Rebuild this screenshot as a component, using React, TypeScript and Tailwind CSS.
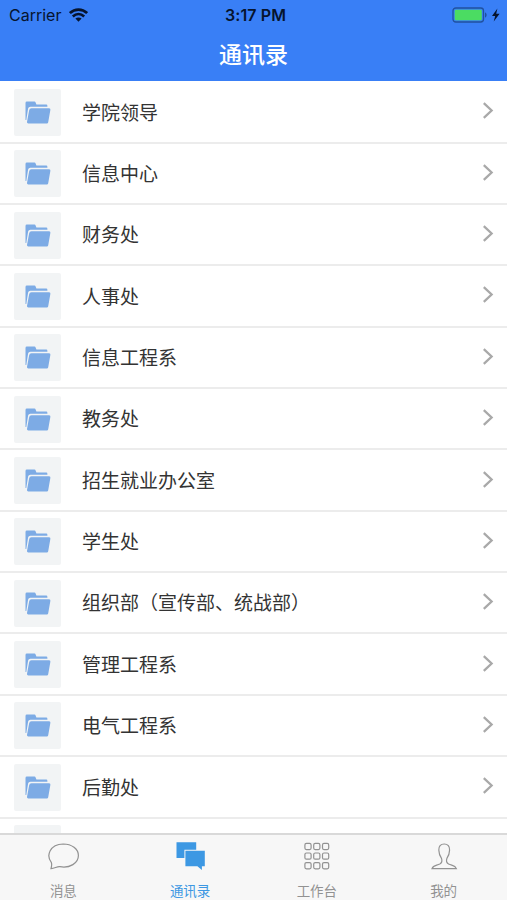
const departments = [
  "学院领导",
  "信息中心",
  "财务处",
  "人事处",
  "信息工程系",
  "教务处",
  "招生就业办公室",
  "学生处",
  "组织部（宣传部、统战部）",
  "管理工程系",
  "电气工程系",
  "后勤处",
  "",
];

function WifiIcon() {
  return (
    <svg className="-mt-px h-[14px] w-[19px]" viewBox="0 0 19 14" fill="none" stroke="#06142e" strokeWidth="2.7">
      <path d="M0.9 5.1C5.8 0.5 13.2 0.5 18.1 5.1" />
      <path d="M3.8 8.4C7.2 5.4 11.8 5.4 15.2 8.4" />
      <path d="M6.4 10.6C8.2 9.1 10.8 9.1 12.6 10.6L9.5 13.7Z" fill="#06142e" stroke="none" />
    </svg>
  );
}

function BatteryIcon() {
  return (
    <svg className="h-4 w-[50px]" viewBox="0 0 50 16">
      <rect x="1" y="1" width="30.5" height="14" rx="2.8" fill="none" stroke="#20529f" strokeWidth="1.3" />
      <rect x="2.7" y="2.7" width="27.1" height="10.6" rx="1.2" fill="#4bdc62" />
      <path d="M33 5.5c2.2.6 2.2 4.4 0 5Z" fill="#20529f" />
      <path d="M45.4 1.6 40 8.9h3.2L41.7 14.4 47.6 6.8h-3.4Z" fill="#06142e" />
    </svg>
  );
}

function FolderIcon() {
  return (
    <svg className="h-[23px] w-[26px]" viewBox="0 0 26 23" fill="#7dabe5">
      <path d="M0.5 19V2Q.5.6 1.9.6h7.6q.8 0 1.1.8l.8 2.2h9.8q1.2 0 1.2 1.2v.9H5.4q-1.9 0-2.3 1.9L1.3 19Z" />
      <path d="M6.5 7.2h17.6q1.5 0 1.3 1.5l-2.2 12.6q-.2 1.2-1.4 1.2H3.3q-1.5 0-1.3-1.4L4.1 9.4Q4.4 7.2 6.5 7.2Z" />
    </svg>
  );
}

function MessageIcon() {
  return (
    <svg className="ml-0.5 h-[30px] w-8" viewBox="0 0 32 30" fill="none" stroke="#929292" strokeWidth="1.2">
      <path d="M3.4 21.6C-2.2 14.4 1.8 3.3 15.2 3c8.6 0 15.2 5.1 15.2 11.5 0 7.7-8.6 12.9-18.4 11.2-3-.4-5 1.6-9 1.9.6-2 1-4 .4-6Z" />
    </svg>
  );
}

function ContactsIcon() {
  return (
    <svg className="ml-0.5 h-[30px] w-8" viewBox="0 0 32 30" fill="#3d98e3">
      <path d="M1.5 1.2h19.7v7.5H9.4v8.2H1.5Z" />
      <path d="M10.4 9.8h19.4v15.4h-2.9v3.9L22.4 25.2h-12Z" />
    </svg>
  );
}

function GridIcon() {
  return (
    <svg className="h-[30px] w-8" viewBox="0 0 32 30" fill="none" stroke="#929292" strokeWidth="1.2">
      {[2.4, 12, 21.6].map((y) =>
        [3.9, 12.7, 21.5].map((x) => <rect key={`${x}-${y}`} x={x} y={y} width="6.2" height="6.2" rx="1.5" />)
      )}
    </svg>
  );
}

function ProfileIcon() {
  return (
    <svg className="h-[30px] w-8" viewBox="0 0 32 30" fill="none" stroke="#929292" strokeWidth="1.2">
      <path d="M16.2 3c-3.6 0-5.6 2.5-5.4 6.1.1 4 1.2 6.2 2.7 8.3.9 2.6.6 4.4-1.7 5.6-3.5 1.7-6.5 1.2-7.8 4.6h24.4c-1.3-3.4-4.3-2.9-7.8-4.6-2.3-1.2-2.6-3-1.7-5.6 1.5-2.1 2.6-4.3 2.7-8.3.2-3.6-1.8-6.1-5.4-6.1Z" />
    </svg>
  );
}

const tabs = [
  { label: "消息", icon: MessageIcon, active: false },
  { label: "通讯录", icon: ContactsIcon, active: true },
  { label: "工作台", icon: GridIcon, active: false },
  { label: "我的", icon: ProfileIcon, active: false },
];

export default function App() {
  return (
    <div className="flex h-[900px] w-[507px] flex-col overflow-hidden bg-white font-['Inter','Noto_Sans_CJK_SC',sans-serif]">
      <header className="h-[81px] shrink-0 bg-[#397ff6]">
        <div className="grid h-[30px] grid-cols-3 items-center pr-[5px] pl-[9px] text-[#06142e]">
          <div className="flex items-center gap-2">
            <span className="text-base">Carrier</span>
            <WifiIcon />
          </div>
          <span className="pb-px text-center text-base font-semibold tracking-[0.1px]">3:17 PM</span>
          <div className="flex justify-end">
            <BatteryIcon />
          </div>
        </div>
        <h1 className="text-center text-[23px] leading-[50px] font-medium text-white">通讯录</h1>
      </header>

      <main className="min-h-0 flex-1 overflow-hidden pt-[1.2px]">
        {departments.map((name, i) => (
          <div
            key={i}
            className="flex h-[61.36px] items-center border-b-2 border-[#ececec] pr-[13px] pl-[14px]"
          >
            <div className="mt-px flex h-[47px] w-[47px] shrink-0 items-center justify-center rounded-xs bg-[#f2f4f5]">
              <FolderIcon />
            </div>
            <span className="ml-[21px] flex-1 pt-1 text-[19px] text-[#333]">{name}</span>
            <svg className="-mt-px h-[18px] w-3" viewBox="0 0 12 18" fill="none" stroke="#a9a9a9" strokeWidth="2.3">
              <path d="m1.8 1.2 7.8 7.3-7.8 7.3" />
            </svg>
          </div>
        ))}
      </main>

      <nav className="grid h-[67px] shrink-0 grid-cols-4 border-t-2 border-[#d9d9d9] bg-[#f7f7f7]">
        {tabs.map((tab) => {
          const Icon = tab.icon;
          return (
            <div key={tab.label} className="flex flex-col items-center pt-[6px]">
              <Icon />
              <span
                className={`mt-[10px] text-[13.5px] leading-5 ${tab.active ? "text-[#3d98e3]" : "text-[#929292]"}`}
              >
                {tab.label}
              </span>
            </div>
          );
        })}
      </nav>
    </div>
  );
}
